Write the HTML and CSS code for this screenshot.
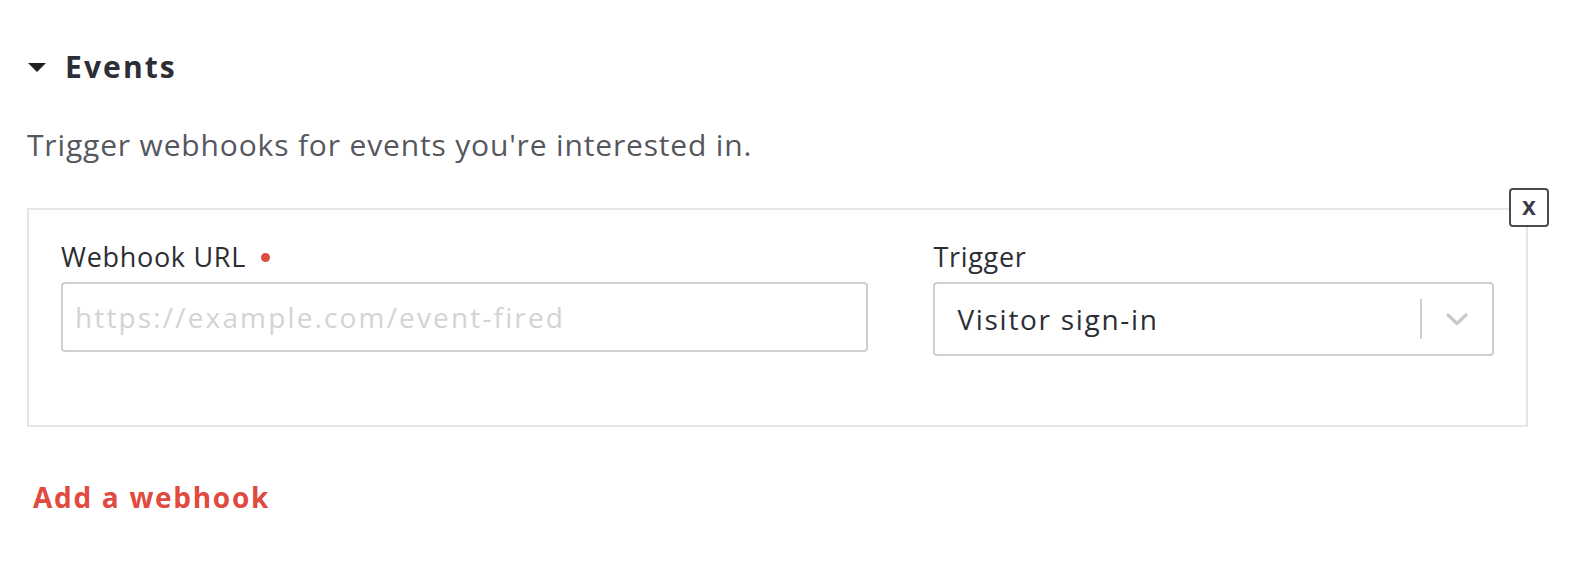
FILE: index.html
```html
<!DOCTYPE html>
<html lang="en">
<head>
<meta charset="utf-8">
<title>Events</title>
<link rel="stylesheet" href="styles.css">
</head>
<body>
<section class="events">
  <h2 class="events-title"><span class="caret" aria-hidden="true"></span>Events</h2>
  <p class="events-desc">Trigger webhooks for events you're interested in.</p>
  <div class="webhook-card">
    <button class="remove-btn" type="button" aria-label="Remove">x</button>
    <div class="field field-url">
      <label class="field-label">Webhook URL <span class="required-dot"></span></label>
      <input class="text-input" type="text" placeholder="https://example.com/event-fired">
    </div>
    <div class="field field-trigger">
      <label class="field-label">Trigger</label>
      <div class="select">
        <span class="select-value">Visitor sign-in</span>
        <span class="select-divider"></span>
        <svg class="select-chevron" width="22" height="14" viewBox="0 0 22 14" aria-hidden="true"><path d="M2 2 L11 10.5 L20 2" fill="none" stroke="#c9c9cc" stroke-width="3.2" stroke-linecap="round" stroke-linejoin="round"/></svg>
      </div>
    </div>
  </div>
  <a class="add-link" href="#">Add a webhook</a>
</section>
</body>
</html>
```
FILE: styles.css
```css
* { box-sizing: border-box; }
html, body { margin: 0; padding: 0; background: #ffffff; }
body { font-family: "Open Sans", "Noto Sans", sans-serif; color: #2d2f36; }

.events {
  padding: 49px 42px 0 27px;
  display: flex;
  flex-direction: column;
  align-items: flex-start;
}

.events-title {
  margin: 0;
  display: flex;
  align-items: center;
  font-size: 30px;
  line-height: 36px;
  font-weight: 700;
  letter-spacing: 2.1px;
  color: #2c2e35;
}
.caret {
  width: 0; height: 0;
  border-left: 9px solid transparent;
  border-right: 9px solid transparent;
  border-top: 9px solid #1f2024;
  margin: 0 19px 0 1px;
}

.events-desc {
  margin: 42px 0 0 0;
  font-size: 30px;
  line-height: 36px;
  letter-spacing: 0.84px;
  color: #55575e;
}

.webhook-card {
  position: relative;
  align-self: stretch;
  margin-top: 45px;
  border: 2px solid #e6e6e8;
  padding: 32px 32px 69px 32px;
  display: flex;
  align-items: flex-start;
  gap: 65px;
}

.remove-btn {
  position: absolute;
  top: -22px;
  right: -23px;
  width: 40px;
  height: 39px;
  border: 2px solid #4a4c52;
  border-radius: 4px;
  background: #ffffff;
  color: #3a3c42;
  font-family: "Liberation Sans", Arial, sans-serif;
  font-weight: 700;
  font-size: 25px;
  line-height: 30px;
  padding: 0 0 4px 0;
  cursor: pointer;
}

.field { display: flex; flex-direction: column; gap: 10px; }
.field-url { width: 808px; }
.field-trigger { width: 561px; }

.field-label {
  font-size: 27px;
  line-height: 30px;
  letter-spacing: 0.7px;
  color: #2c2e35;
  display: flex;
  align-items: center;
}
.required-dot {
  display: inline-block;
  width: 9px; height: 9px;
  border-radius: 50%;
  background: #e04a3f;
  margin-left: 15px;
}

.text-input {
  width: 100%;
  height: 70px;
  border: 2px solid #cfcfd3;
  border-radius: 4px;
  padding: 0 12px;
  font-family: "Open Sans", "Noto Sans", sans-serif;
  font-size: 28px;
  letter-spacing: 2.15px;
  color: #2c2e35;
  outline: none;
}
.text-input::placeholder { color: #d3d3d6; }

.select {
  height: 74px;
  border: 2px solid #cfcfd3;
  border-radius: 4px;
  display: flex;
  align-items: center;
  padding: 0 0 0 22px;
}
.select-value {
  flex: 1;
  font-size: 28px;
  letter-spacing: 1.7px;
  color: #2c2e35;
}
.select-divider {
  width: 2px;
  height: 40px;
  background: #cfcfd3;
}
.select-chevron { margin: 2px 24px 0 24px; }

.add-link {
  margin: 52px 0 0 6px;
  font-size: 28px;
  line-height: 36px;
  font-weight: 700;
  letter-spacing: 1.7px;
  color: #e04a3f;
  text-decoration: none;
}
```
